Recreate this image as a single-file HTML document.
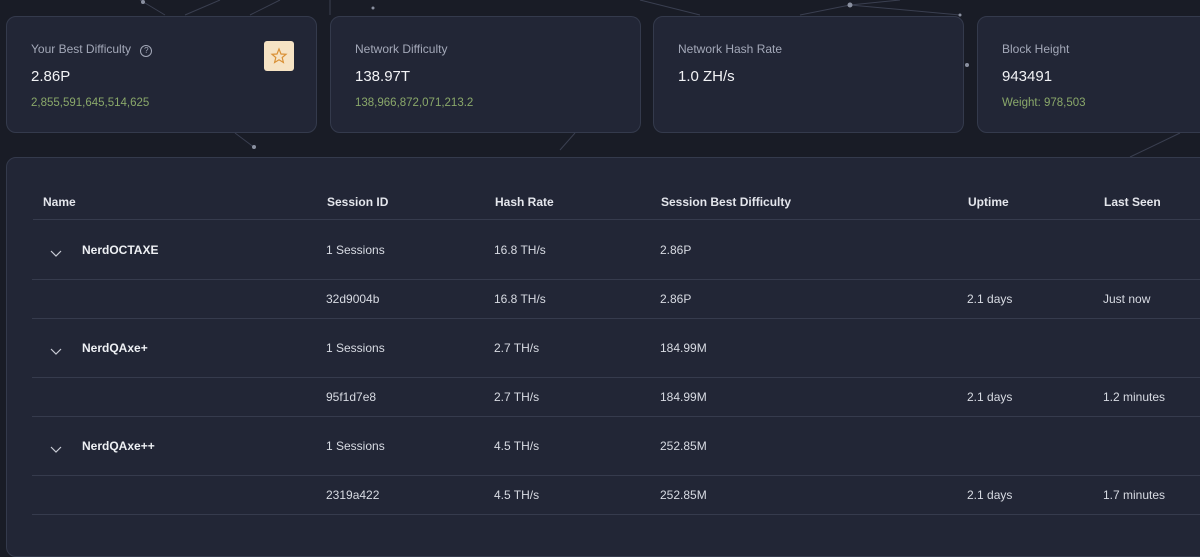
<!DOCTYPE html>
<html><head><style>
body{margin:0;width:1200px;height:537px;overflow:hidden;background:#191c26;font-family:"Liberation Sans",sans-serif;position:relative}
.card{position:absolute;top:16px;height:117px;width:311px;background:#222636;border:1px solid #343a4c;border-radius:10px;box-sizing:border-box}
.lbl{position:absolute;left:24px;top:25px;font-size:12px;color:#a3a8b8}
.val{position:absolute;left:24px;top:51px;font-size:15px;color:#f2f3f6}
.sub{position:absolute;left:24px;top:80px;font-size:11.5px;color:#8aa86a}
.panel{position:absolute;left:6px;top:157px;width:1210px;height:400px;background:#222636;border:1px solid #343a4c;border-radius:10px;box-sizing:border-box}
.t{position:absolute;font-size:12px;color:#d8dbe3}
.h{font-weight:bold;color:#e4e6ec}
.b{font-weight:bold;color:#eef0f4}
.line{position:absolute;left:32px;right:0;height:1px;background:#363b4d}
.chev{position:absolute;left:50px;width:12px;height:12px}
</style></head><body>
<svg style="position:absolute;left:0;top:0" width="1200" height="537"><g stroke="#3a3f50" stroke-width="1" fill="none"><path d="M140 0 L165 15 M220 0 L185 15 M280 0 L250 15 M330 0 L330 15 M850 5 L800 15 M850 5 L960 15 M850 5 L900 0 M235 133 L255 148 M560 150 L575 133 M1130 157 L1180 133 M640 0 L700 15"/></g><g fill="#8a90a0"><circle cx="143" cy="2" r="2"/><circle cx="850" cy="5" r="2.5"/><circle cx="254" cy="147" r="2"/><circle cx="967" cy="65" r="2"/><circle cx="960" cy="15" r="1.5"/><circle cx="373" cy="8" r="1.5"/></g></svg>
<div class="card" style="left:6px"><div class="lbl">Your Best Difficulty <span style="display:inline-block;width:10px;height:10px;border:1px solid #a3a8b8;border-radius:50%;font-size:8px;text-align:center;line-height:10px;margin-left:6px">?</span></div><div class="val">2.86P</div><div class="sub">2,855,591,645,514,625</div>
<div style="position:absolute;left:257px;top:24px;width:30px;height:30px;background:#f6e3c4;border-radius:3px"><svg width="30" height="30" viewBox="0 0 30 30"><path d="M15 8 L17 13 L22 13.3 L18.2 16.5 L19.4 21.5 L15 18.8 L10.6 21.5 L11.8 16.5 L8 13.3 L13 13 Z" fill="none" stroke="#d99035" stroke-width="1.2"/></svg></div></div>
<div class="card" style="left:330px"><div class="lbl">Network Difficulty</div><div class="val">138.97T</div><div class="sub">138,966,872,071,213.2</div></div>
<div class="card" style="left:653px"><div class="lbl">Network Hash Rate</div><div class="val">1.0 ZH/s</div></div>
<div class="card" style="left:977px"><div class="lbl">Block Height</div><div class="val">943491</div><div class="sub">Weight: 978,503</div></div>
<div class="panel">
<div class="t h" style="left:36px;top:37px">Name</div><div class="t h" style="left:320px;top:37px">Session ID</div><div class="t h" style="left:488px;top:37px">Hash Rate</div><div class="t h" style="left:654px;top:37px">Session Best Difficulty</div><div class="t h" style="left:961px;top:37px">Uptime</div><div class="t h" style="left:1097px;top:37px">Last Seen</div>
<div class="line" style="top:61px;left:26px"></div>
</div>

<svg class="chev" style="top:247px" viewBox="0 0 12 12"><path d="M1 4 L6 9 L11 4" stroke="#c9ccd6" fill="none" stroke-width="1.2"/></svg>
<div class="t b" style="left:82px;top:243px">NerdOCTAXE</div><div class="t" style="left:326px;top:243px">1 Sessions</div><div class="t" style="left:494px;top:243px">16.8 TH/s</div><div class="t" style="left:660px;top:243px">2.86P</div>
<div class="line" style="top:279px"></div>
<div class="t" style="left:326px;top:292px">32d9004b</div><div class="t" style="left:494px;top:292px">16.8 TH/s</div><div class="t" style="left:660px;top:292px">2.86P</div><div class="t" style="left:967px;top:292px">2.1 days</div><div class="t" style="left:1103px;top:292px">Just now</div>
<div class="line" style="top:318px"></div>

<svg class="chev" style="top:345px" viewBox="0 0 12 12"><path d="M1 4 L6 9 L11 4" stroke="#c9ccd6" fill="none" stroke-width="1.2"/></svg>
<div class="t b" style="left:82px;top:341px">NerdQAxe+</div><div class="t" style="left:326px;top:341px">1 Sessions</div><div class="t" style="left:494px;top:341px">2.7 TH/s</div><div class="t" style="left:660px;top:341px">184.99M</div>
<div class="line" style="top:377px"></div>
<div class="t" style="left:326px;top:390px">95f1d7e8</div><div class="t" style="left:494px;top:390px">2.7 TH/s</div><div class="t" style="left:660px;top:390px">184.99M</div><div class="t" style="left:967px;top:390px">2.1 days</div><div class="t" style="left:1103px;top:390px">1.2 minutes</div>
<div class="line" style="top:416px"></div>

<svg class="chev" style="top:443px" viewBox="0 0 12 12"><path d="M1 4 L6 9 L11 4" stroke="#c9ccd6" fill="none" stroke-width="1.2"/></svg>
<div class="t b" style="left:82px;top:439px">NerdQAxe++</div><div class="t" style="left:326px;top:439px">1 Sessions</div><div class="t" style="left:494px;top:439px">4.5 TH/s</div><div class="t" style="left:660px;top:439px">252.85M</div>
<div class="line" style="top:475px"></div>
<div class="t" style="left:326px;top:488px">2319a422</div><div class="t" style="left:494px;top:488px">4.5 TH/s</div><div class="t" style="left:660px;top:488px">252.85M</div><div class="t" style="left:967px;top:488px">2.1 days</div><div class="t" style="left:1103px;top:488px">1.7 minutes</div>
<div class="line" style="top:514px"></div>
</body></html>
